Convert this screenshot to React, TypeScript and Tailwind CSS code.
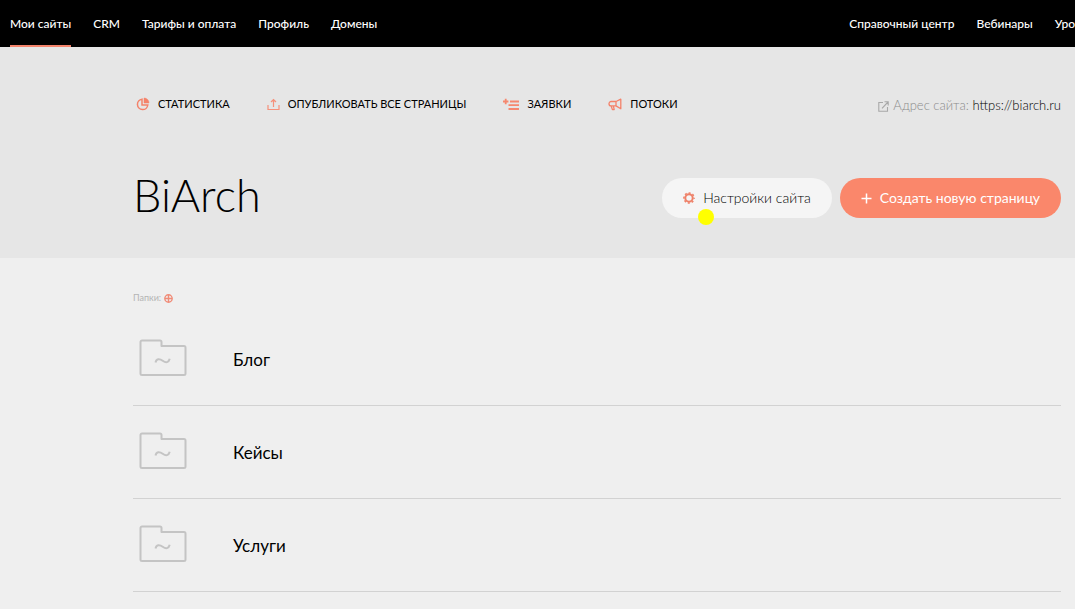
const mainLinks = ['Мои сайты', 'CRM', 'Тарифы и оплата', 'Профиль', 'Домены'];
const helpLinks = ['Справочный центр', 'Вебинары', 'Уро'];
const folders = ['Блог', 'Кейсы', 'Услуги'];

const PieIcon = () => (
  <svg width="14" height="14" viewBox="0 0 14 14" fill="none" stroke="#f4826a" strokeWidth="1.5">
    <path d="M6 2.2A5.2 5.2 0 1 0 11.8 8H6z" />
    <path d="M8 1v5h5A5 5 0 0 0 8 1z" fill="#f4826a" strokeWidth="0.5" />
  </svg>
);

const UploadIcon = () => (
  <svg width="13" height="13" viewBox="0 0 13 13" fill="none" stroke="#f5917b" strokeWidth="1.2">
    <path d="M1 7v4.5h11V7M6.5 9V1.5M4 4l2.5-2.5L9 4" />
  </svg>
);

const RequestsIcon = () => (
  <svg width="16" height="13" viewBox="0 0 16 13" fill="none" stroke="#f5886f" strokeWidth="1.8">
    <path d="M0 3.5h5.4M2.7 .8v5.4M7 3.5h9M5.5 7.2h10.5M5.5 11h10.5" />
  </svg>
);

const MegaphoneIcon = () => (
  <svg width="14" height="13" viewBox="0 0 14 13" fill="none" stroke="#f4826a" strokeWidth="1.3" strokeLinejoin="round">
    <path d="M8 3.5H3.2A2.2 2.2 0 0 0 1 5.700c0 1.2 1 2.2 2.2 2.2H8M8 3.5l4.800-2.3v9.6L8 7.900zM3.2 8l1.2 3.6h1.800L5.400 8" />
  </svg>
);

const ExternalIcon = () => (
  <svg width="11" height="11" viewBox="0 0 11 11" fill="none" stroke="#a8a8a8" strokeWidth="1.1">
    <path d="M5 1.5H.8v8.7h8.7V6M4 7.3L10 1M6.5 .8h3.7v3.7" />
  </svg>
);

const GearIcon = () => (
  <svg width="12" height="12" viewBox="0 0 12 12" fill="none" stroke="#ee8068">
    <circle cx="6" cy="6" r="3.7" strokeWidth="2" />
    <circle cx="6" cy="6" r="5.1" strokeWidth="1.5" strokeDasharray="2.003 2.003" strokeDashoffset="1" />
  </svg>
);

const PlusIcon = () => (
  <svg width="11" height="11" viewBox="0 0 11 11" stroke="#fff" strokeWidth="1.5">
    <path d="M5.5 .5v10M.5 5.5h10" />
  </svg>
);

const AddFolderIcon = () => (
  <svg width="9" height="9" viewBox="0 0 9 9" fill="none" stroke="#f08c78" strokeWidth="1.4">
    <circle cx="4.5" cy="4.5" r="3.7" />
    <path d="M4.5 1v7M1 4.5h7" />
  </svg>
);

const FolderIcon = () => (
  <svg
    width="48"
    height="38"
    viewBox="0 0 48 38"
    fill="none"
    stroke="#c4c4c4"
    strokeWidth="2"
    strokeLinejoin="round"
    className="mb-1"
  >
    <path d="M3 1.5h18a1.5 1.5 0 0 1 1.5 1.5v4H45a1.5 1.5 0 0 1 1.5 1.5V34.5a1.5 1.5 0 0 1-1.5 1.5H3a1.5 1.5 0 0 1-1.5-1.5V3A1.5 1.5 0 0 1 3 1.5z" />
    <path d="M16.5 23.5c.8-4 4-4.2 7.2-1.8s6 2 7-2" />
  </svg>
);

const actions = [
  { label: 'СТАТИСТИКА', icon: <PieIcon /> },
  { label: 'ОПУБЛИКОВАТЬ ВСЕ СТРАНИЦЫ', icon: <UploadIcon /> },
  { label: 'ЗАЯВКИ', icon: <RequestsIcon /> },
  { label: 'ПОТОКИ', icon: <MegaphoneIcon /> },
];

const Header = () => (
  <header className="flex h-[47px] justify-between overflow-hidden bg-black pl-[10px] text-xs font-medium whitespace-nowrap text-white">
    <nav className="flex gap-[22px]">
      {mainLinks.map((label, i) => (
        <a
          key={label}
          href="#"
          className={`flex items-center border-y-2 border-t-transparent ${i === 0 ? 'border-b-[#f4846c]' : 'border-b-transparent'}`}
        >
          {label}
        </a>
      ))}
    </nav>
    <nav className="flex gap-[22px]">
      {helpLinks.map((label) => (
        <a key={label} href="#" className="flex items-center">
          {label}
        </a>
      ))}
    </nav>
  </header>
);

const App = () => (
  <div className="min-h-screen bg-[#efefef] font-['Lato','Liberation_Sans',sans-serif] text-black">
    <Header />

    <section className="bg-[#e6e6e6] pt-12 pr-[14px] pb-10 pl-[133px]">
      <div className="flex h-5 items-center justify-between whitespace-nowrap">
        <div className="flex gap-[37px] pb-0.5 pl-[3px]">
          {actions.map(({ label, icon }) => (
            <a key={label} href="#" className="flex items-center gap-2 text-[11px]">
              {icon}
              {label}
            </a>
          ))}
        </div>
        <div className="flex items-center gap-1 pt-0.5 text-[13px] font-light text-[#8c8c8c]">
          <ExternalIcon />
          <span>
            Адрес сайта:{' '}
            <a href="https://biarch.ru" className="text-black">
              https://biarch.ru
            </a>
          </span>
        </div>
      </div>

      <div className="mt-[63px] flex h-10 items-center justify-between whitespace-nowrap">
        <h1 className="pb-1 text-[45px] font-light">BiArch</h1>
        <div className="flex gap-2">
          <button className="relative flex h-10 items-center gap-2 rounded-full bg-[#f5f5f5] px-[21px] text-sm font-light">
            <GearIcon />
            Настройки сайта
            {/* Cursor highlight */}
            <span className="absolute top-[31px] left-9 size-4 rounded-full bg-[#ffff00]" />
          </button>
          <button className="flex h-10 items-center gap-2 rounded-full bg-[#fa876b] px-[21px] text-sm text-white">
            <PlusIcon />
            Создать новую страницу
          </button>
        </div>
      </div>
    </section>

    <main className="pt-8 pr-[14px] pl-[133px]">
      <div className="flex h-4 items-center gap-[3px] text-[9px] text-[#b4b4b4]">
        Папки:
        <button aria-label="Добавить папку">
          <AddFolderIcon />
        </button>
      </div>
      <ul className="mt-[7px]">
        {folders.map((name) => (
          <li key={name} className="border-b border-[#d2d2d2]">
            <a href="#" className="flex h-[92px] items-center gap-[46px] pt-0.5 pl-[6px] text-[17px]">
              <FolderIcon />
              {name}
            </a>
          </li>
        ))}
      </ul>
    </main>
  </div>
);

export default App;
